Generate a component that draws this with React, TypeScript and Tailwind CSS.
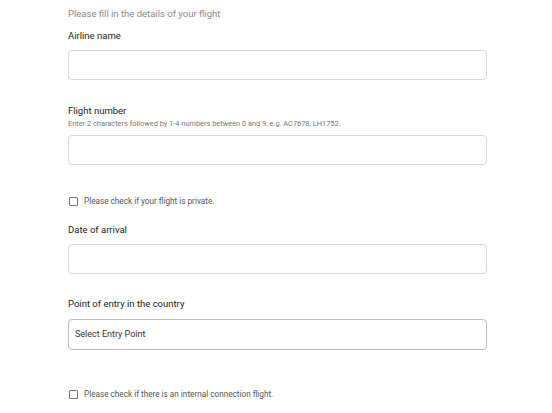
import React from 'react';

function Field({ label, hint, top }: { label: string; hint?: string; top: string }) {
  return (
    <div className={top}>
      <label className="block text-[9.5px] text-[#222] leading-[12px]">{label}</label>
      {hint && <p className="mt-[2px] text-[7.4px] text-[#777] leading-[9px]">{hint}</p>}
      <input
        type="text"
        className={`${hint ? 'mt-[7px]' : 'mt-[8px]'} block w-full h-[30px] rounded-[4px] border border-[#d6d6d6] bg-white px-2 text-[9px] outline-none`}
      />
    </div>
  );
}

function Check({ label, top }: { label: string; top: string }) {
  return (
    <label className={`${top} flex items-center gap-[6px] text-[8.2px] text-[#555] leading-[10px]`}>
      <span className="inline-block w-[9px] h-[9px] ml-[1px] rounded-[1px] border border-[#777] bg-white" />
      {label}
    </label>
  );
}

export default function App() {
  return (
    <div className="w-[552px] h-[413px] overflow-hidden bg-white" style={{ fontFamily: 'Roboto, "Noto Sans", sans-serif' }}>
      <div className="ml-[68px] w-[419px] pt-[8px]">
        <p className="text-[9.5px] text-[#8a8a8a] leading-[12px]">Please fill in the details of your flight</p>
        <Field label="Airline name" top="mt-[10px]" />
        <Field
          label="Flight number"
          hint="Enter 2 characters followed by 1-4 numbers between 0 and 9, e.g. AC7678, LH1752."
          top="mt-[25px]"
        />
        <Check label="Please check if your flight is private." top="mt-[31px]" />
        <Field label="Date of arrival" top="mt-[18px]" />
        <div className="mt-[24px]">
          <label className="block text-[9.5px] text-[#222] leading-[12px]">Point of entry in the country</label>
          <div className="mt-[9px] flex items-center h-[31px] rounded-[4px] border border-[#bdbdbd] bg-white px-[6px] text-[9px] text-[#333]">
            Select Entry Point
          </div>
        </div>
        <Check label="Please check if there is an internal connection flight." top="mt-[39px]" />
      </div>
    </div>
  );
}
